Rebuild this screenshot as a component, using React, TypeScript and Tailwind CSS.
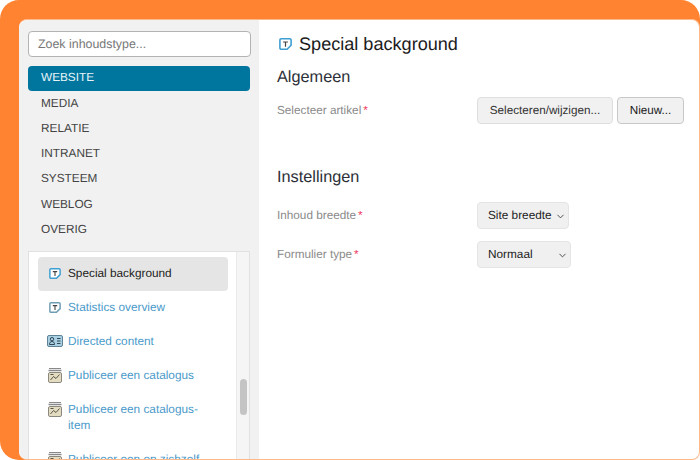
import { ChevronDown } from "lucide-react";

function TextIcon({ active, size = 12 }: { active?: boolean; size?: number }) {
  const color = active ? "#3f9fd3" : "#6f9db5";
  return (
    <svg width={size} height={size - 1} viewBox="0 0 16 15" fill="none" className="shrink-0">
      <path
        d="M2.500 1h11a1.500 1.500 0 0 1 1.500 1.500V9l-5 5H2.500A1.500 1.500 0 0 1 1 12.500v-10A1.500 1.500 0 0 1 2.500 1z"
        fill="#fff"
        stroke={color}
        strokeWidth="2"
      />
      <path d="M5 5h6M8 5v6" stroke="#444" strokeWidth="1.500" />
    </svg>
  );
}

function ContactIcon() {
  return (
    <svg width="16" height="12" viewBox="0 0 16 12" fill="none" className="shrink-0">
      <rect x="0.500" y="0.500" width="15" height="11" rx="1.500" fill="#a9cfe2" stroke="#5f8296" />
      <circle cx="5" cy="4.200" r="1.700" stroke="#2f4654" />
      <path d="M2.500 9.500c0-2 1-3 2.500-3s2.500 1 2.500 3z" stroke="#2f4654" />
      <path d="M10 3.500h3.500M10 6h3.500M10 8.500h3.500" stroke="#2f4654" />
    </svg>
  );
}

function CatalogIcon() {
  return (
    <svg width="14" height="15" viewBox="0 0 14 15" fill="none" className="shrink-0">
      <path d="M1 0.500h12" stroke="#8a8a8a" />
      <path d="M0.500 2.500h13" stroke="#8a8a8a" strokeWidth="1.500" />
      <rect x="0.500" y="4.500" width="13" height="10" rx="1.500" fill="#e4dcc0" stroke="#8a887e" />
      <path d="M2.500 12l3-3.500 2.500 2 3.500-4" stroke="#55534a" />
      <path d="M2.500 6.500h3" stroke="#55534a" />
    </svg>
  );
}

function ListRow({
  icon,
  label,
  active,
}: {
  icon: React.ReactNode;
  label: string;
  active?: boolean;
}) {
  return (
    <div
      className={`flex gap-[5px] rounded pl-[9px] pr-[20px] ${
        active ? "bg-[#e5e5e5] text-[#1c1c1c]" : "text-[#4a9aca]"
      } pb-[9.500px] pt-[8.500px] text-[11.800px] leading-4`}
    >
      <div className="flex h-4 w-4 shrink-0 items-center justify-center">{icon}</div>
      <span>{label}</span>
    </div>
  );
}

const categories = ["MEDIA", "RELATIE", "INTRANET", "SYSTEEM", "WEBLOG", "OVERIG"];

function Label({ text, low }: { text: string; low?: boolean }) {
  return (
    <div className={`w-[200px] text-[11.750px] text-[#8a8a8a] ${low ? "pt-0.5" : ""}`}>
      {text}
      <span className="ml-0.5 text-[#f0345a]">*</span>
    </div>
  );
}

function FakeSelect({ value, width }: { value: string; width: string }) {
  return (
    <div
      className={`flex h-[26.500px] items-center justify-between rounded border border-[#e4e4e4] bg-[#f0f0f0] pl-[10px] pr-[2px] pt-0.5 text-[11.800px] text-[#222] ${width}`}
    >
      <span className="whitespace-nowrap">{value}</span>
      <ChevronDown size={11} color="#444" />
    </div>
  );
}

export default function App() {
  return (
    <div className="h-[460px] w-[700px] overflow-hidden bg-white font-['Liberation_Sans',Arial,sans-serif] [text-rendering:geometricPrecision]">
      <div className="h-full rounded-[19px] bg-[#ff8330] pl-[19px] pt-[19px]">
        <div className="h-[441px] rounded-[8px] border-t border-r border-b border-[#ffb88a] bg-white">
          <div className="flex h-full overflow-hidden rounded-[8px]">
            {/* left column */}
            <div className="flex w-[240px] shrink-0 flex-col bg-[#f1f1f1] px-[9px] pt-[11px]">
              <div className="flex h-[26px] w-[222.500px] items-center rounded border border-[#b3b3b3] bg-white px-[9px] text-[12.400px] text-[#777]">
                Zoek inhoudstype...
              </div>
              <div className="mt-[8.700px] flex h-[25px] w-[222px] items-center rounded bg-[#00769f] px-[13px] text-[11.800px] text-[#e8f4f8]">
                WEBSITE
              </div>
              <div className="mt-[0.400px]">
                {categories.map((c) => (
                  <div key={c} className="flex h-[25.200px] items-center px-[13px] text-[11.800px] text-[#444]">
                    {c}
                  </div>
                ))}
              </div>
              <div className="mt-[8.600px] flex min-h-0 flex-1 border-l border-t border-r border-[#e0e0e0] bg-white">
                <div className="flex-1 overflow-hidden pl-[9px] pr-[8px] pt-[5px]">
                  <ListRow active icon={<TextIcon active />} label="Special background" />
                  <ListRow icon={<TextIcon />} label="Statistics overview" />
                  <ListRow icon={<ContactIcon />} label="Directed content" />
                  <ListRow icon={<CatalogIcon />} label="Publiceer een catalogus" />
                  <ListRow icon={<CatalogIcon />} label="Publiceer een catalogus-item" />
                  <ListRow icon={<CatalogIcon />} label="Publiceer een op zichzelf" />
                </div>
                <div className="relative w-[13px] shrink-0 border-l border-[#eaeaea] bg-[#f5f5f5]">
                  <div className="absolute left-[3px] top-[127px] h-[36px] w-[7px] rounded bg-[#c4c4c4]" />
                </div>
              </div>
            </div>
            {/* right column */}
            <div className="flex-1 pl-[18px] pt-[12px]">
              <div className="flex items-center gap-[7px] pl-[2px] text-[18.100px] leading-[24px] text-[#1c1c1c]">
                <TextIcon active size={13} />
                Special background
              </div>
              <div className="mt-[10px] text-[16.300px] leading-[22px] text-[#2d3038]">Algemeen</div>
              <div className="mt-[9px] flex items-center">
                <Label text="Selecteer artikel" />
                <div className="flex gap-1">
                  <div className="flex h-[27px] w-[136px] items-center justify-center rounded border border-[#dedede] bg-[#f1f1f1] text-[11.700px] text-[#333]">
                    Selecteren/wijzigen...
                  </div>
                  <div className="flex h-[27px] w-[67px] items-center justify-center rounded border border-[#c8c8c8] bg-[#f1f1f1] text-[11.700px] text-[#222]">
                    Nieuw...
                  </div>
                </div>
              </div>
              <div className="mt-[41.500px] text-[16.300px] leading-[22px] text-[#2d3038]">Instellingen</div>
              <div className="mt-[14.500px] flex items-center">
                <Label low text="Inhoud breedte" />
                <FakeSelect value="Site breedte" width="w-[92px]" />
              </div>
              <div className="mt-[12.500px] flex items-center">
                <Label low text="Formulier type" />
                <FakeSelect value="Normaal" width="w-[94px]" />
              </div>
            </div>
          </div>
        </div>
      </div>
    </div>
  );
}
